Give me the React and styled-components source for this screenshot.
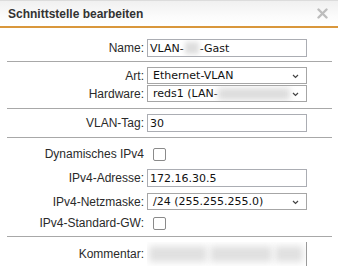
import React from 'react'
import styled, { createGlobalStyle } from 'styled-components'

const GlobalStyle = createGlobalStyle`
  html, body {
    margin: 0;
    padding: 0;
    background: #fff;
  }
  body {
    font-family: "Liberation Sans", Arial, sans-serif;
    font-size: 12px;
    color: #222;
  }
`

const Dialog = styled.div`
  width: 338px;
  height: 266px;
  overflow: hidden;
  background: #fff;
`

const Header = styled.div`
  display: flex;
  align-items: center;
  justify-content: space-between;
  padding: 0 8px;
  border-top: 1px solid #dcdcdc;
  border-bottom: 2px solid #d9973c;
  background: linear-gradient(#f0f0f0, #fbfbfb 60%, #fff);
  box-sizing: border-box;
  height: 28px;
`

const Title = styled.div`
  font-weight: bold;
  font-size: 12px;
  color: #333;
`

const Close = styled.div`
  display: flex;
  margin-right: 2px;
`

const Body = styled.div`
  padding-top: 11px;
`

const Section = styled.div`
  display: flex;
  flex-direction: column;
  gap: ${p => p.$gap || 0}px;
  padding-top: ${p => p.$top || 0}px;
`

const Divider = styled.div`
  height: 1px;
  background: #a8a8a8;
  margin: ${p => p.$top || 4}px 6px 0 7px;
`

const Row = styled.div`
  display: grid;
  grid-template-columns: 144px 160px;
  column-gap: 3px;
  align-items: center;
  height: ${p => p.$h || 18}px;
  margin-top: ${p => p.$mt || 0}px;
`

const Label = styled.div`
  text-align: right;
  white-space: nowrap;
  font-size: 12px;
  color: #2a2a2a;
`

const Box = styled.div`
  box-sizing: border-box;
  height: ${p => p.$h || 18}px;
  border: 1px solid #abadb3;
  background: #fff;
  display: flex;
  align-items: center;
  padding-left: 2px;
  font-family: "DejaVu Sans", Verdana, sans-serif;
  font-size: 11px;
  color: #111;
  white-space: nowrap;
  overflow: hidden;
`

const SelectBox = styled(Box)`
  position: relative;
  padding-left: 5px;
  border-color: #a6a6a6;
`

const Chevron = styled.svg`
  position: absolute;
  right: 7px;
  top: 50%;
  margin-top: -2px;
`

const Blur = styled.span`
  display: inline-block;
  width: ${p => p.$w}px;
  height: ${p => p.$bh || 12}px;
  background: ${p => p.$c || '#d9d9d9'};
  filter: blur(${p => p.$r || 2.5}px);
  margin: 0 ${p => p.$m || 0}px;
`

const Check = styled.div`
  width: 13px;
  height: 13px;
  box-sizing: border-box;
  border: 1.5px solid #8a8a8a;
  border-radius: 2px;
  background: #fff;
  margin-left: 6px;
`

const Comment = styled.div`
  box-sizing: border-box;
  height: 24px;
  border-right: 1px solid #9a9a9a;
  display: flex;
  align-items: center;
  padding: 0 3px 0 2px;
  gap: 3px;
  overflow: hidden;
`

const ChevronIcon = () => (
  <Chevron width="7" height="5" viewBox="0 0 7 5">
    <path d="M1 1 L3.5 3.5 L6 1" fill="none" stroke="#444" strokeWidth="1.2" />
  </Chevron>
)

export default function App() {
  return (
    <Dialog>
      <GlobalStyle />
      <Header>
        <Title>Schnittstelle bearbeiten</Title>
        <Close>
          <svg width="11" height="11" viewBox="0 0 11 11">
            <path d="M1.5 1.5 L9.5 9.5 M9.5 1.5 L1.5 9.5" stroke="#bdbdbd" strokeWidth="2.4" strokeLinecap="round" />
          </svg>
        </Close>
      </Header>
      <Body>
        <Section>
          <Row>
            <Label>Name:</Label>
            <Box>VLAN-<Blur $w={14} $c="#dedede" $m={1} />-Gast</Box>
          </Row>
        </Section>
        <Divider />
        <Section $top={5} $gap={1}>
          <Row $h={17}>
            <Label>Art:</Label>
            <SelectBox $h={17}>Ethernet-VLAN<ChevronIcon /></SelectBox>
          </Row>
          <Row $h={17}>
            <Label>Hardware:</Label>
            <SelectBox $h={17}>reds1 (LAN-<Blur $w={72} $c="#dcdcdc" $r={3} /><ChevronIcon /></SelectBox>
          </Row>
        </Section>
        <Divider $top={6} />
        <Section $top={5}>
          <Row>
            <Label>VLAN-Tag:</Label>
            <Box>30</Box>
          </Row>
        </Section>
        <Divider $top={5} />
        <Section $top={7}>
          <Row>
            <Label>Dynamisches IPv4</Label>
            <Check />
          </Row>
          <Row $mt={6}>
            <Label>IPv4-Adresse:</Label>
            <Box>172.16.30.5</Box>
          </Row>
          <Row $h={17} $mt={6}>
            <Label>IPv4-Netzmaske:</Label>
            <SelectBox $h={17}>/24 (255.255.255.0)<ChevronIcon /></SelectBox>
          </Row>
          <Row $mt={4}>
            <Label>IPv4-Standard-GW:</Label>
            <Check />
          </Row>
        </Section>
        <Divider $top={4} />
        <Section $top={5}>
          <Row $h={24}>
            <Label>Kommentar:</Label>
            <Comment>
              <Blur $w={58} $bh={16} $c="#e0e0e0" $r={3.5} />
              <Blur $w={62} $bh={16} $c="#e0e0e0" $r={3.5} />
              <Blur $w={28} $bh={16} $c="#e0e0e0" $r={3.5} />
            </Comment>
          </Row>
        </Section>
      </Body>
    </Dialog>
  )
}
